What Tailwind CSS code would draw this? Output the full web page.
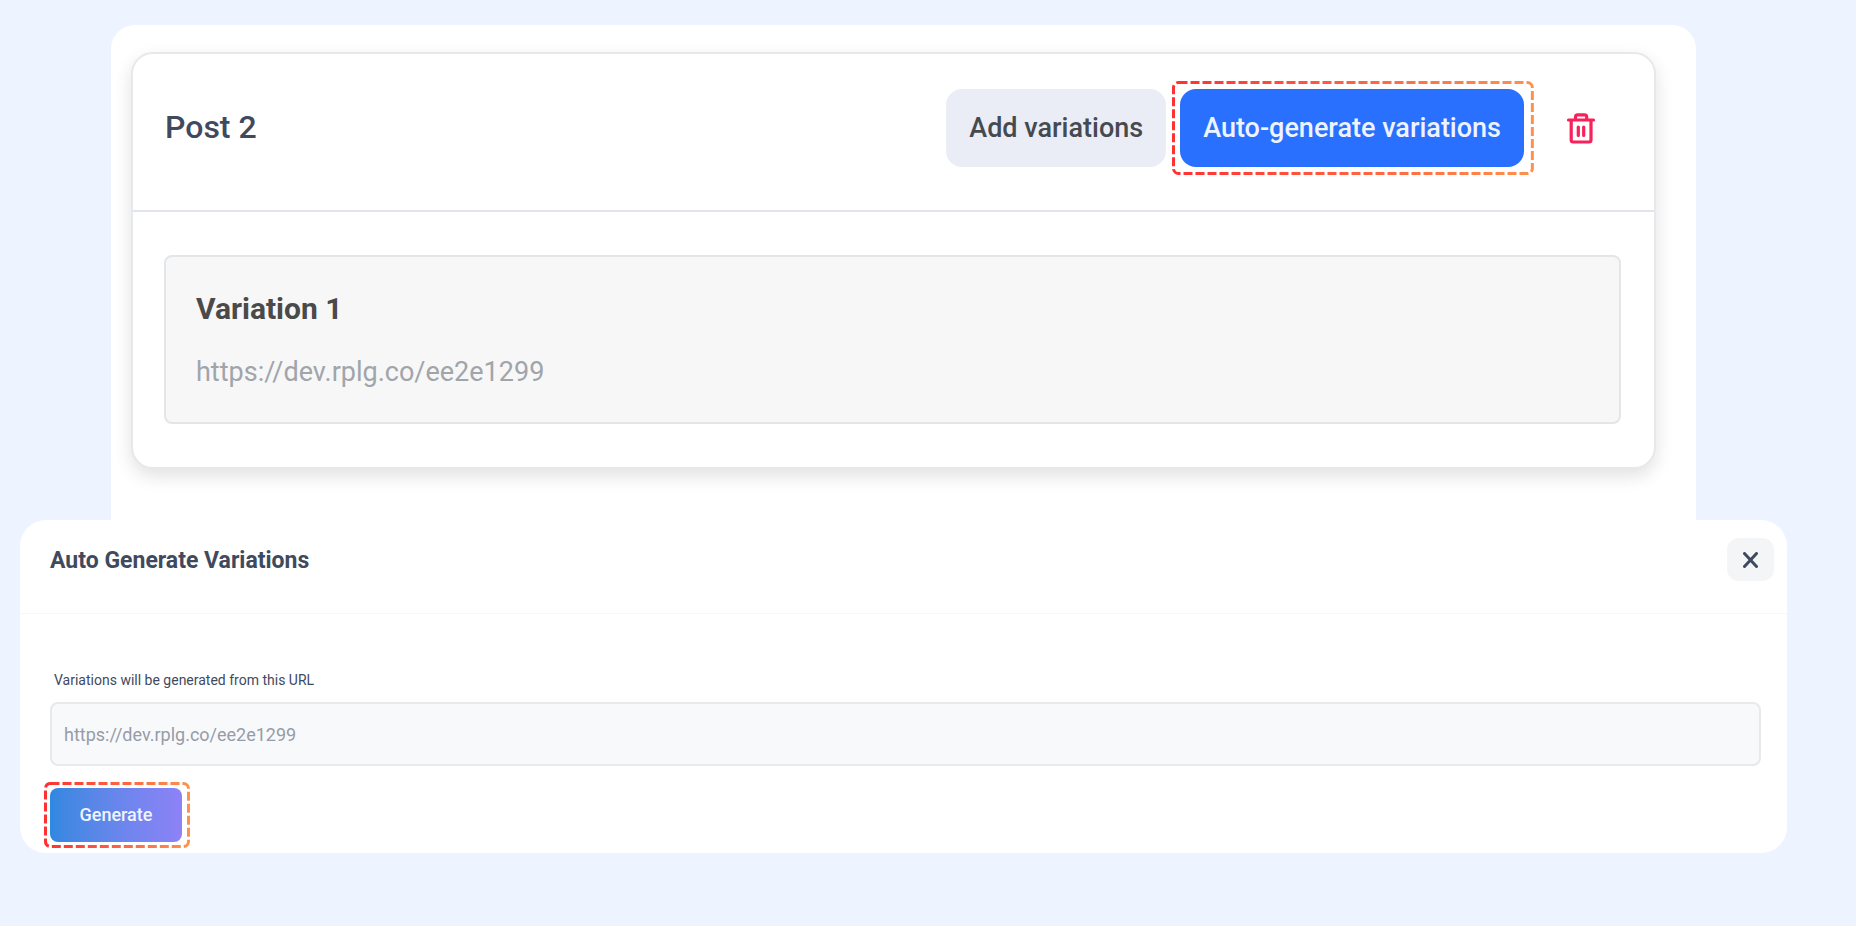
<!DOCTYPE html>
<html lang="en">
<head>
<meta charset="utf-8">
<meta name="viewport" content="width=device-width, initial-scale=1">
<title>Auto Generate Variations</title>
<script src="https://cdn.jsdelivr.net/npm/@tailwindcss/browser@4"></script>
</head>
<body class="min-h-screen bg-[#edf4ff] pt-[25px] pr-[69px] pb-8 pl-5 font-['Roboto',sans-serif] text-[#3f4a5e]">
  <main>
    <section class="mx-[91px] rounded-t-3xl bg-white pt-[27px] pr-10 pb-[51px] pl-5">
      <article class="rounded-[22px] border-2 border-[#e6e9ec] bg-white shadow-[0_7px_18px_rgba(0,0,0,0.12)]">
        <header class="flex items-start justify-between border-b-2 border-[#e2e3eb] pt-[35px] pr-[55px] pb-[43px] pl-8">
          <h2 class="text-[32px] leading-[76px] font-medium">Post 2</h2>
          <div class="flex items-center">
            <button type="button" class="mr-[14px] h-[78px] rounded-2xl bg-[#eaedf5] px-[23px] text-[27px] font-medium text-[#454a50]">Add variations</button>
            <div class="relative">
              <button type="button" class="h-[78px] rounded-2xl bg-[#2970ff] px-[23px] text-[27px] font-medium text-[#edf3ff]">Auto-generate variations</button>
              <svg class="pointer-events-none absolute -top-2 -left-2 h-[calc(100%+16px)] w-[calc(100%+18px)]" fill="none" aria-hidden="true">
                <defs><linearGradient id="highlight-a"><stop stop-color="#ff3131"/><stop offset="1" stop-color="#ff914d"/></linearGradient></defs>
                <rect x="1.5" y="1.5" class="h-[calc(100%-3px)] w-[calc(100%-3px)]" rx="5" stroke="url(#highlight-a)" stroke-width="3" stroke-dasharray="9 3"/>
              </svg>
            </div>
            <button type="button" aria-label="Delete post" class="ml-[39px] grid h-12 w-9 place-items-center text-[#f8215a]">
              <svg class="h-8 w-8" viewBox="0 0 32 32" fill="none" stroke="currentColor" stroke-width="3.200" stroke-linecap="round" stroke-linejoin="round" aria-hidden="true">
                <path d="M3.500 8H28.500M10.500 7.500V5Q10.500 2.800 12.700 2.800H19.500Q21.700 2.800 21.700 5V7.500M6.200 8.500V28Q6.200 30 8.200 30H24Q26 30 26 28V8.500M13.300 15V23.500M18.700 15V23.500"/>
              </svg>
            </button>
          </div>
        </header>
        <div class="pt-[43px] pr-[33px] pb-[43px] pl-[31px]">
          <div class="rounded-lg border-2 border-[#e2e6e9] bg-[#f7f7f7] px-[30px] pt-8 pb-[30px]">
            <h3 class="text-[30px] leading-10 font-bold text-[#4a4a4a]">Variation 1</h3>
            <p class="mt-[23px] text-[27px] leading-10 text-[#a0a5aa]">https://dev.rplg.co/ee2e1299</p>
          </div>
        </div>
      </article>
    </section>

    <section role="dialog" aria-labelledby="dialog-title" class="rounded-[26px] bg-white">
      <header class="flex items-start justify-between border-b border-[#f7f7f9] pt-[18px] pr-[13px] pb-[29px] pl-[30px]">
        <h2 id="dialog-title" class="text-[23px] leading-[46px] font-bold">Auto Generate Variations</h2>
        <button type="button" aria-label="Close" class="grid h-[43px] w-[47px] place-items-center rounded-xl bg-[#f3f5f7]">
          <svg class="h-4 w-4" viewBox="0 0 16 16" stroke="currentColor" stroke-width="3" stroke-linecap="round" aria-hidden="true"><path d="M1.500 1.500 13.500 14.500M13.500 1.500 1.500 14.500"/></svg>
        </button>
      </header>
      <form class="pt-14 pr-[26px] pb-[11px] pl-[30px]">
        <label for="source-url" class="block pl-1 text-sm leading-5">Variations will be generated from this URL</label>
        <input id="source-url" type="text" readonly value="https://dev.rplg.co/ee2e1299" class="mt-3 block h-16 w-full rounded-lg border-2 border-[#e8e9ed] bg-[#f8f9fb] px-3 text-lg text-[#969ca7] outline-none">
        <div class="relative mt-[22px] w-fit">
          <button type="button" class="block h-[54px] w-[132px] rounded-lg bg-linear-to-r from-[#2f88e0] to-[#8d82f7] text-lg font-medium text-[#eef5ff]">Generate</button>
          <svg class="pointer-events-none absolute -top-1.5 -left-1.5 h-[calc(100%+12px)] w-[calc(100%+14px)]" fill="none" aria-hidden="true">
            <defs><linearGradient id="highlight-b"><stop stop-color="#ff3131"/><stop offset="1" stop-color="#ff914d"/></linearGradient></defs>
            <rect x="1.5" y="1.5" class="h-[calc(100%-3px)] w-[calc(100%-3px)]" rx="5" stroke="url(#highlight-b)" stroke-width="3" stroke-dasharray="9 3"/>
          </svg>
        </div>
      </form>
    </section>
  </main>
</body>
</html>
